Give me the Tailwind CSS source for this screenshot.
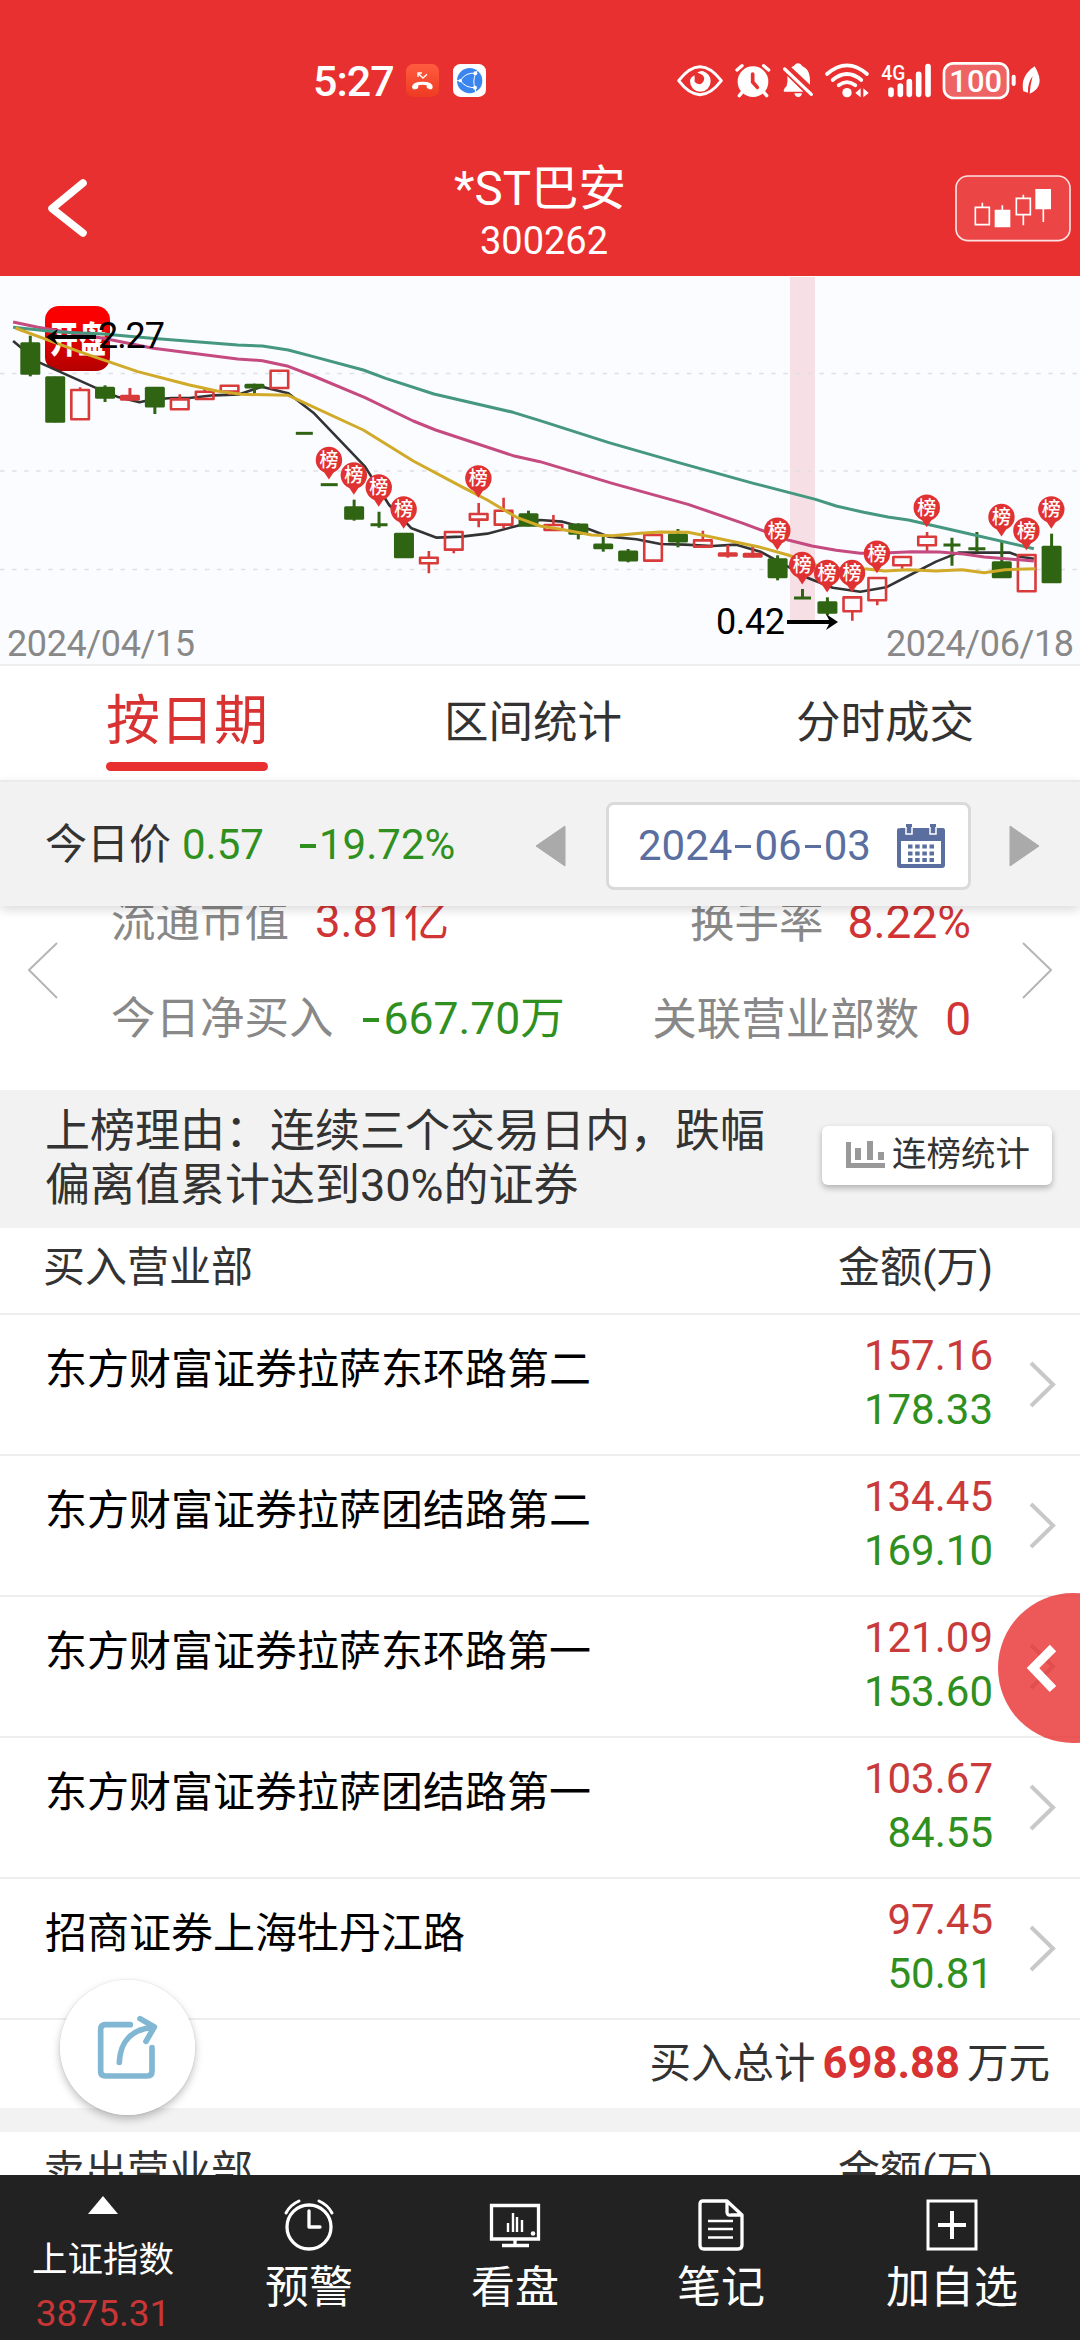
<!DOCTYPE html>
<html lang="zh-CN">
<head>
<meta charset="utf-8">
<title>*ST巴安 300262</title>
<script src="https://cdn.jsdelivr.net/npm/@tailwindcss/browser@4"></script>
</head>
<body class="bg-white">
<div class="relative w-[1080px] h-[2340px] overflow-hidden flex flex-col bg-white text-[#333] font-['Roboto','Noto_Sans_CJK_SC',sans-serif]">

  <!-- Header -->
  <header class="h-[276px] shrink-0 bg-[#e93030] text-white flex flex-col">
    <div class="h-[120px] shrink-0 pt-10 flex justify-between">
      <div class="flex h-20 items-center pl-[313px]">
        <span class="w-[93px] mt-[3px] text-[43px] font-medium leading-none tracking-[-1px] whitespace-nowrap">5:27</span>
        <svg class="w-[33px] h-[33px]" viewBox="0 0 99 99">
          <defs><linearGradient id="call" x1="0" y1="0" x2="0" y2="1"><stop offset="0" stop-color="#ff5c40"/><stop offset="1" stop-color="#ee3b22"/></linearGradient></defs>
          <rect width="99" height="99" rx="22" fill="url(#call)"/>
          <path d="M18 70Q17 53 50 53Q82 53 80 70Q80 77 72 76L64 73Q61 71 62 64Q50 60 37 64Q38 71 34 74L27 76Q19 77 18 70Z" fill="#fff"/>
          <path d="M48 27H36V39M36 28L51 42L63 31" fill="none" stroke="#fff" stroke-width="4"/>
        </svg>
        <svg class="ml-[14px] w-[33px] h-[33px]" viewBox="0 0 99 99">
          <rect width="99" height="99" rx="22" fill="#fff"/><circle cx="50" cy="50" r="38" fill="#3b86ee"/>
          <path d="M22 50Q38 24 68 28Q58 52 66 71Q38 72 22 50M68 28L74 18M66 71L68 84M22 50H12" fill="none" stroke="#fff" stroke-width="3"/>
          <circle cx="22" cy="50" r="5" fill="#fff"/><circle cx="67" cy="28" r="6" fill="#fff"/><circle cx="66" cy="71" r="6" fill="#fff"/>
        </svg>
      </div>
      <svg class="w-[400px] h-20 mr-5" viewBox="0 0 1200 240" fill="none" stroke="#fff" stroke-linecap="round">
        <path d="M56 122Q120 38 184 122Q120 206 56 122Z" stroke-width="9" stroke-linejoin="round"/>
        <path d="M90 124A31 31 0 0 0 152 124Q152 102 128 93Q118 92 112 98Q136 104 132 120Q126 138 108 130Q98 122 104 106Q90 112 90 124Z" fill="#fff" stroke="none"/>
        <path d="M104 106Q98 122 108 130Q118 150 138 136L130 150H104Z" fill="#fff" stroke="none"/>
        <circle cx="279" cy="125" r="46" fill="#fff" stroke="none"/>
        <path d="M231 90L246 77M311 77L326 90M248 155L238 167M310 155L320 167" stroke-width="10"/>
        <path d="M278 102V126L292 142" stroke="#e93030" stroke-width="11"/>
        <path d="M394 82Q404 78 406 73Q414 67 422 73Q426 79 436 84Q450 94 450 124L450 134ZM382 108L430 155H372Q368 150 380 138Q384 125 382 108ZM403 160H426Q424 171 415 171Q405 171 403 160Z" fill="#fff" stroke="none"/>
        <path d="M374 87L454 163" stroke-width="10"/>
        <path d="M501 102Q561 50 621 102M518 120Q561 84 604 120M536 136Q561 117 586 136" stroke-width="11"/>
        <circle cx="561" cy="158" r="14" fill="#fff" stroke="none"/>
        <path d="M586 159L602 145V172ZM626 159L610 145V172Z" fill="#fff" stroke="none"/>
        <text x="664" y="120" fill="#fff" stroke="none" class="text-[62px] font-medium font-['Roboto']" textLength="72" lengthAdjust="spacingAndGlyphs">4G</text>
        <path d="M693 150V163M721 138V163M748 125V163M776 103V163M804 80V163" stroke-width="17"/>
        <rect x="852" y="70" width="192" height="104" rx="28" fill="#fff" fill-opacity=".25" stroke-width="8"/>
        <text x="868" y="155" fill="#fff" stroke="none" class="text-[95px] font-medium font-['Roboto']" textLength="158" lengthAdjust="spacingAndGlyphs">100</text>
        <path d="M1061 110V132" stroke-width="12"/>
        <path d="M1124 79Q1080 108 1090 154L1104 158Q1102 130 1118 108Q1110 138 1109 161Q1160 140 1124 79Z" fill="#fff" stroke="none"/>
      </svg>
    </div>
    <div class="flex-1 flex justify-between">
      <div class="w-[200px] pl-[46px] pt-[59px]">
        <svg class="w-11 h-[60px]" viewBox="0 0 44 60" fill="none" stroke="#fff" stroke-width="7.500" stroke-linecap="round" stroke-linejoin="round"><path d="M37 4L6 29.500L37 54"/></svg>
      </div>
      <div class="text-center">
        <div class="mt-[39px] text-[47.500px] leading-[60px]">*ST巴安</div>
        <div class="text-[38px] leading-[44px] pl-2">300262</div>
      </div>
      <div class="w-[200px] flex justify-end pr-[9px] pt-[54px]">
        <svg class="w-[118px] h-[68px]" viewBox="0 0 354 204" fill="none" stroke="#fff" stroke-width="5">
          <rect x="9" y="6" width="342" height="194" rx="36" fill="#fff" fill-opacity=".1" stroke-opacity=".85"/>
          <path d="M67 100H109V152H67ZM88 100V86M190 73H232V122H190ZM211 73V62M211 122V154M148 108V94M271 105V144"/>
          <path d="M125 107H172V160H125ZM247 45H294V106H247Z" fill="#fff" stroke="none"/>
        </svg>
      </div>
    </div>
  </header>

  <!-- Candlestick chart -->
  <section class="h-[390px] shrink-0 bg-[#fbfcff] border-b-2 border-[#eee]">
    <svg class="w-[1080px] h-[388px] block" viewBox="0 0 1080 388">
      <defs><linearGradient id="logo" x1="0" y1="0" x2="0" y2="1"><stop offset=".2" stop-color="#fb0000"/><stop offset="1" stop-color="#b40000"/></linearGradient></defs>
      <rect x="790" y="1" width="25" height="343" fill="#f6dfe5"/>
      <path d="M0 97.500H1080M0 195H1080M0 293.500H1080" stroke="#dfe0e5" stroke-width="1.500" stroke-dasharray="4.500 7.550"/>
      <rect x="45" y="30" width="65" height="65" rx="14" fill="url(#logo)"/>
      <text transform="translate(50 77) scale(1 1.3)" class="text-[28px] font-black font-['Noto_Sans_CJK_SC']" fill="#fff">开盘</text>
      <g transform="translate(0 -6) scale(.34439 .33333)" fill="none" stroke-linejoin="round">
        <polyline vector-effect="non-scaling-stroke" stroke="#333" stroke-width="2.600" points="38,213 60,232 115,278 275,352 340,380 405,397 445,388 500,384 550,384 620,376 695,373 760,350 837,370 910,428 1060,590 1130,705 1195,775 1268,803 1340,800 1415,791 1500,768 1568,750 1633,755 1703,775 1768,800 1848,808 1918,822 1988,824 2068,828 2138,824 2208,845 2288,890 2348,925 2418,953 2498,965 2573,952 2648,912 2718,875 2783,848 2933,848 2963,860 3002,866"/>
      </g>
      <g id="candles"></g>
      <g transform="translate(0 -6) scale(.34439 .33333)" fill="none" stroke-linejoin="round">
        <polyline vector-effect="non-scaling-stroke" stroke="#c44a80" stroke-width="3" points="38,156 110,172 300,205 445,235 690,267 762,272 837,289 910,318 1060,383 1200,453 1265,480 1490,557 1568,575 1778,640 1998,703 2158,760 2288,810 2358,828 2428,841 2498,850 2568,849 2648,845 2728,846 2798,852 2858,861 3002,873"/>
        <polyline vector-effect="non-scaling-stroke" stroke="#45977f" stroke-width="3" points="38,172 160,185 300,192 440,205 690,225 762,228 837,240 910,260 1055,300 1120,325 1260,372 1490,427 1568,452 1768,518 1968,577 2188,640 2368,688 2428,708 2508,727 2578,741 2638,750 2788,785 3002,836"/>
        <polyline vector-effect="non-scaling-stroke" stroke="#d0aa28" stroke-width="3" points="45,174 60,180 160,218 230,245 315,275 400,305 550,345 630,363 700,373 837,376 1055,480 1200,573 1340,650 1415,690 1500,742 1568,768 1628,778 1718,795 1778,797 1858,790 1918,786 1998,787 2048,797 2208,832 2288,855 2368,885 2448,897 2518,897 2568,903 2638,899 2718,903 2793,899 2858,908 2918,899 3007,896"/>
      </g>
      <g id="pins"></g>
      <g stroke="#000" stroke-width="4" fill="none"><path d="M96 61H50M787 346H832"/></g>
      <path d="M46 61L58 53L54 61L58 69ZM838 346L826 338L830 346L826 354Z" fill="#000"/>
      <g class="text-[36px] font-['Roboto']">
        <text x="98" y="72" textLength="67">2.27</text>
        <text x="716" y="358" textLength="69">0.42</text>
        <text x="7" y="380" fill="#888" textLength="188">2024/04/15</text>
        <text x="886" y="380" fill="#888" textLength="188">2024/06/18</text>
      </g>
    </svg>
  </section>

  <!-- Tabs -->
  <nav class="h-[114px] shrink-0 flex">
    <div class="w-[374px] flex flex-col items-center text-[#d83232]">
      <div class="mt-[16px] text-[54px] leading-[80px]">按日期</div>
      <div class="h-[9px] w-[162px] rounded-full bg-[#e93030]"></div>
    </div>
    <div class="w-[318px] pt-[22px] text-center text-[44.500px] leading-[70px]">区间统计</div>
    <div class="w-[386px] pt-[22px] text-center text-[44.500px] leading-[70px]">分时成交</div>
  </nav>

  <!-- Date bar -->
  <div class="relative z-10 h-[126px] shrink-0 bg-[#f2f2f2] border-t-2 border-[#ebebeb] shadow-[0_4px_10px_rgba(0,0,0,0.14)] flex items-center text-[42px] leading-[60px] whitespace-nowrap">
    <div class="w-[138px] pl-[45px] pt-[2px]">今日价</div>
    <div class="w-[115px] ml-[44px] pt-[2px] text-[#2f9020]">0.57</div>
    <div class="w-[237px] pt-[2px] pl-[3px] flex text-[#2f9020]"><i class="self-center h-[3.500px] w-[16px] mr-[3px] mt-[2px] bg-[#2f9020]"></i>19.72%</div>
    <svg class="w-[32px] h-[42px] mt-1" viewBox="0 0 32 42"><path d="M2 21L31 1V41Z" fill="#aaa" stroke="#aaa" stroke-linejoin="round"/></svg>
    <div class="ml-[40px] mt-[4px] w-[365px] h-[88px] rounded-lg border-[3px] border-[#dadada] bg-white flex items-center pl-[29px] text-[#5a6e9f]">
      <span class="w-[259px] flex">2024<i class="self-center h-[3px] w-[16px] mx-[3px] bg-[#5a6e9f]"></i>06<i class="self-center h-[3px] w-[16px] mx-[3px] bg-[#5a6e9f]"></i>03</span>
      <svg class="w-12 h-[46px]" viewBox="0 0 48 46" fill="#5a6e9f">
        <path fill-rule="evenodd" d="M2 6Q2 5 4 5H9V1H15V5H33V1H39V5H46Q48 5 48 8V42Q48 45 45 45H3Q0 45 0 42V8Q0 5 2 5ZM4 18V41H44V18Z"/>
        <path d="M9 4V11H15V4M33 4V11H39V4" fill="none" stroke="#fff" stroke-width="1.500"/>
        <path d="M11 23.500H37M11 30.500H37M11 37H37" stroke="#5a6e9f" stroke-width="4" stroke-dasharray="4.500 2.667" fill="none"/>
      </svg>
    </div>
    <svg class="ml-[37px] w-[32px] h-[42px] mt-1" viewBox="0 0 32 42"><path d="M31 21L2 1V41Z" fill="#aaa" stroke="#aaa" stroke-linejoin="round"/></svg>
  </div>

  <!-- Stats carousel -->
  <section class="h-[184px] shrink-0 flex text-[44.500px] text-[#888] whitespace-nowrap">
    <svg class="mt-[34px] ml-[27px] w-8 h-[60px] shrink-0" viewBox="0 0 32 60" fill="none" stroke="#b5b5b5" stroke-width="2"><path d="M30 3L2 30L30 58"/></svg>
    <div class="ml-[52px] w-[860px] mt-[-32px]">
      <div class="flex justify-between leading-[96px]"><div>流通市值<span class="ml-[26px] text-[45.500px] text-[#d03434]">3.81亿</span></div><div>换手率<span class="ml-[24px] text-[46px] text-[#d03434]">8.22%</span></div></div>
      <div class="flex justify-between leading-[96px]"><div class="flex">今日净买入<i class="ml-[29px] mr-[5px] self-center h-[4px] w-[16px] bg-[#2f9020]"></i><span class="text-[#2f9020]">667.70万</span></div><div>关联营业部数<span class="ml-[26px] text-[46px] text-[#d03434]">0</span></div></div>
    </div>
    <svg class="mt-[34px] ml-[50px] w-8 h-[60px] shrink-0" viewBox="0 0 32 60" fill="none" stroke="#b5b5b5" stroke-width="2"><path d="M2 3L30 30L2 58"/></svg>
  </section>

  <!-- Reason -->
  <section class="h-[138px] shrink-0 bg-[#f2f2f2] flex">
    <div class="ml-[45px] mt-[15px] w-[777px] text-[45px] leading-[54px] whitespace-nowrap">上榜理由：连续三个交易日内，跌幅<br>偏离值累计达到30%的证券</div>
    <button class="mt-[36px] w-[230px] h-[59px] rounded-md bg-white shadow-[0_3px_6px_rgba(0,0,0,0.28)] flex items-center pl-6 text-[34.500px] leading-[56px] pb-[3px] whitespace-nowrap">
      <svg class="w-[39px] h-[30px] mr-[7px]" viewBox="0 0 39 30" fill="#999"><path d="M0 3H5V24H39V29H0ZM9 9H15V21H9ZM21 2H27V21H21ZM32 13H38V21H32Z"/></svg>连榜统计
    </button>
  </section>

  <!-- Buyer list -->
  <div class="h-[85px] shrink-0 pt-[10px] pl-[43px] pr-[87px] flex justify-between text-[42px] leading-[60px]"><span>买入营业部</span><span>金额(万)</span></div>
  <div id="rows" class="flex flex-col shrink-0"></div>

  <div class="h-[90px] shrink-0 border-t-2 border-[#eee] pt-[14px] pr-[30px] flex justify-end items-baseline text-[41.500px] leading-[60px]">买入总计<b class="mx-[7px] text-[43.500px] text-[#d83232]">698.88</b>万元</div>
  <div class="h-6 shrink-0 bg-[#f2f2f2]"></div>
  <div class="h-[43px] shrink-0 overflow-hidden pt-[10px] pl-[43px] pr-[87px] flex justify-between text-[42px] leading-[60px]"><span>卖出营业部</span><span>金额(万)</span></div>

  <!-- Toolbar -->
  <footer class="h-[165px] shrink-0 bg-[#222] text-white flex text-[44px] leading-[60px] whitespace-nowrap">
    <div class="w-[206px] flex flex-col items-center">
      <svg class="mt-[21px] w-8 h-[18px]" viewBox="0 0 32 18"><path d="M16 0L31 18H1Z" fill="#fff"/></svg>
      <div class="mt-[21px] text-[35.500px] leading-[50px]">上证指数</div>
      <div class="mt-[9px] text-[37px] leading-[40px] text-[#c83636]">3875.31</div>
    </div>
    <div class="w-[206px] flex flex-col items-center">
      <svg class="mt-6 w-[52px] h-[52px]" viewBox="0 0 52 52" fill="none" stroke="#fff" stroke-width="3.300" stroke-linecap="round"><circle cx="26" cy="28" r="22"/><path d="M26 12V28H37" stroke-linejoin="round"/><path d="M3 14Q7 6 16 2M49 14Q45 6 36 2" stroke-width="3"/></svg>
      <div class="mt-[7px]">预警</div>
    </div>
    <div class="w-[206px] flex flex-col items-center">
      <svg class="mt-6 w-[52px] h-[52px]" viewBox="0 0 52 52" fill="none" stroke="#fff" stroke-width="3.300"><path d="M2.500 6.500H49.500V40H2.500ZM26 40V46M13 46.500H40"/><path d="M19 24V33M24 14V33M28 18V33M33 21V33" stroke-width="2.400"/><circle cx="44" cy="34.500" r="2.300" fill="#fff" stroke="none"/></svg>
      <div class="mt-[7px]">看盘</div>
    </div>
    <div class="w-[206px] flex flex-col items-center">
      <svg class="mt-6 w-[52px] h-[52px]" viewBox="0 0 52 52" fill="none" stroke="#fff" stroke-width="3.300" stroke-linejoin="round"><path d="M8 2H32L47 16V46Q47 50 43 50H9Q5 50 5 46V5Q5 2 8 2ZM32 2V13Q32 17 36 16H47" /><path d="M13 22H38M13 30H38M13 38.500H38" stroke-width="2.600"/></svg>
      <div class="mt-[7px]">笔记</div>
    </div>
    <div class="w-[256px] flex flex-col items-center">
      <svg class="mt-6 w-[52px] h-[52px]" viewBox="0 0 52 52" fill="none" stroke="#fff" stroke-width="3"><path d="M2 2H50V50H2Z"/><path d="M26 12V40M12 26H40" stroke-width="4"/></svg>
      <div class="mt-[7px]">加自选</div>
    </div>
  </footer>

  <!-- Floating buttons -->
  <div class="absolute z-20 left-[998px] top-[1593px] w-[150px] h-[150px] rounded-full bg-[#e93030]/80">
    <svg class="mt-[50px] ml-[27px] w-9 h-[50px]" viewBox="0 0 36 50" fill="none" stroke="#fff" stroke-width="9"><path d="M28 5L8 25L28 46"/></svg>
  </div>
  <div class="absolute z-20 left-[60px] top-[1980px] w-[135px] h-[135px] rounded-full bg-white/95 shadow-[0_4px_8px_rgba(0,0,0,0.25),0_0_2px_rgba(0,0,0,0.12)]">
    <svg class="w-[135px] h-[135px]" viewBox="60 60 405 405" fill="none" stroke="#82b7d4" stroke-width="17" stroke-linecap="round" stroke-linejoin="round"><path d="M271 194H196Q182 194 182 208V334Q182 348 196 348H322Q336 348 336 334V263M238 307C240 245 275 208 338 202"/><path d="M300 176L343 201L318 244" /></svg>
  </div>
</div>

<script>
  const NS = x => 30.3 + 24.91 * x, Y = v => v / 3 - 6;
  // [high, body top, body bottom, low, kind]; r = rising (hollow), f = flat rising, g = falling, t = open equals close
  const data = [
    [197,218,313,319,'g'],[320,320,457,457,'g'],[352,358,450,450,'r'],[346,352,385,396,'g'],[354,376,391,391,'f'],[352,352,411,432,'g'],
    [373,386,420,420,'r'],[354,363,389,389,'r'],[345,345,367,375,'r'],[341,343,354,372,'g'],[300,300,356,356,'r'],[490,490,490,490,'t'],
    [644,644,644,644,'t'],[689,710,748,752,'g'],[725,764,764,773,'t'],[790,790,863,863,'g'],[843,861,882,910,'r'],[782,784,841,850,'r'],
    [699,730,751,772,'r'],[683,720,766,775,'r'],[722,731,769,769,'g'],[735,763,782,782,'r'],[760,762,793,808,'g'],[800,822,836,845,'g'],
    [837,843,873,877,'g'],[793,793,874,874,'r'],[777,792,816,832,'g'],[782,809,832,832,'r'],[825,848,859,863,'f'],[828,850,862,862,'f'],
    [856,866,923,931,'g'],[957,984,984,984,'t'],[982,995,1030,1036,'g'],[978,980,1026,1052,'r'],[920,922,993,1006,'r'],[857,859,888,896,'r'],
    [786,798,828,843,'r'],[803,825,825,887,'t'],[786,836,836,846,'t'],[813,875,923,923,'g'],[853,853,966,966,'r'],[791,829,938,938,'g']
  ];
  document.getElementById('candles').innerHTML = data.map(([h, a, b, l, k], i) => {
    const x = NS(i), red = '#d93a3a', green = '#2f6413';
    if (k === 't') return `<path d="M${x - 8.5} ${Y(a)}H${x + 8.5}M${x} ${Y(h)}V${Y(l)}" stroke="${green}" stroke-width="3"/>`;
    if (k === 'r') return `<path d="M${x} ${Y(h)}V${Y(a)}M${x} ${Y(b)}V${Y(l)}M${x - 8.8} ${Y(a) + .7}H${x + 8.8}V${Y(b) - .7}H${x - 8.8}Z" fill="none" stroke="${red}" stroke-width="2.6" stroke-linejoin="round"/>`;
    const c = k === 'g' ? green : red;
    return `<path d="M${x} ${Y(h)}V${Y(l)}" stroke="${c}" stroke-width="3"/><rect x="${x - 10}" y="${Y(a) - .5}" width="20" height="${(b - a) / 3 + 1}" rx="1.5" fill="${c}"/>`;
  }).join('');
  const pins = [[12,531],[13,577],[14,613],[15,679],[18,586],[30,743],[31,846],[32,870],[33,870],[34,812],[36,674],[39,702],[40,743],[41,679]];
  document.getElementById('pins').innerHTML = pins.map(([i, t]) => {
    const x = NS(i) - .3, y = Y(t);
    return `<circle cx="${x}" cy="${y + 13}" r="13.2" fill="#e03232"/><path d="M${x - 7} ${y + 22}H${x + 7}L${x} ${y + 32.5}Z" fill="#e03232"/><text x="${x}" y="${y + 20}" text-anchor="middle" fill="#fff" class="text-[19px] font-medium font-['Noto_Sans_CJK_SC']">榜</text>`;
  }).join('');
  const rows = [['东方财富证券拉萨东环路第二','157.16','178.33'],['东方财富证券拉萨团结路第二','134.45','169.10'],['东方财富证券拉萨东环路第一','121.09','153.60'],['东方财富证券拉萨团结路第一','103.67','84.55'],['招商证券上海牡丹江路','97.45','50.81']];
  document.getElementById('rows').innerHTML = rows.map(([n, a, b]) => `
    <div class="h-[141px] border-t-2 border-[#eee] pl-[45px] pr-[22px] flex text-[42px] whitespace-nowrap">
      <div class="flex-1 pt-[25px] leading-[60px] text-black">${n}</div>
      <div class="pt-[14px] text-right leading-[54px]"><div class="text-[#c93a3a]">${a}</div><div class="text-[#2f9020]">${b}</div></div>
      <svg class="mt-[44px] ml-[34px] w-[31px] h-[50px]" viewBox="0 0 31 50" fill="none" stroke="#c8c8c8" stroke-width="4"><path d="M4 4L26 25.500L4 47"/></svg>
    </div>`).join('');
</script>
</body>
</html>
